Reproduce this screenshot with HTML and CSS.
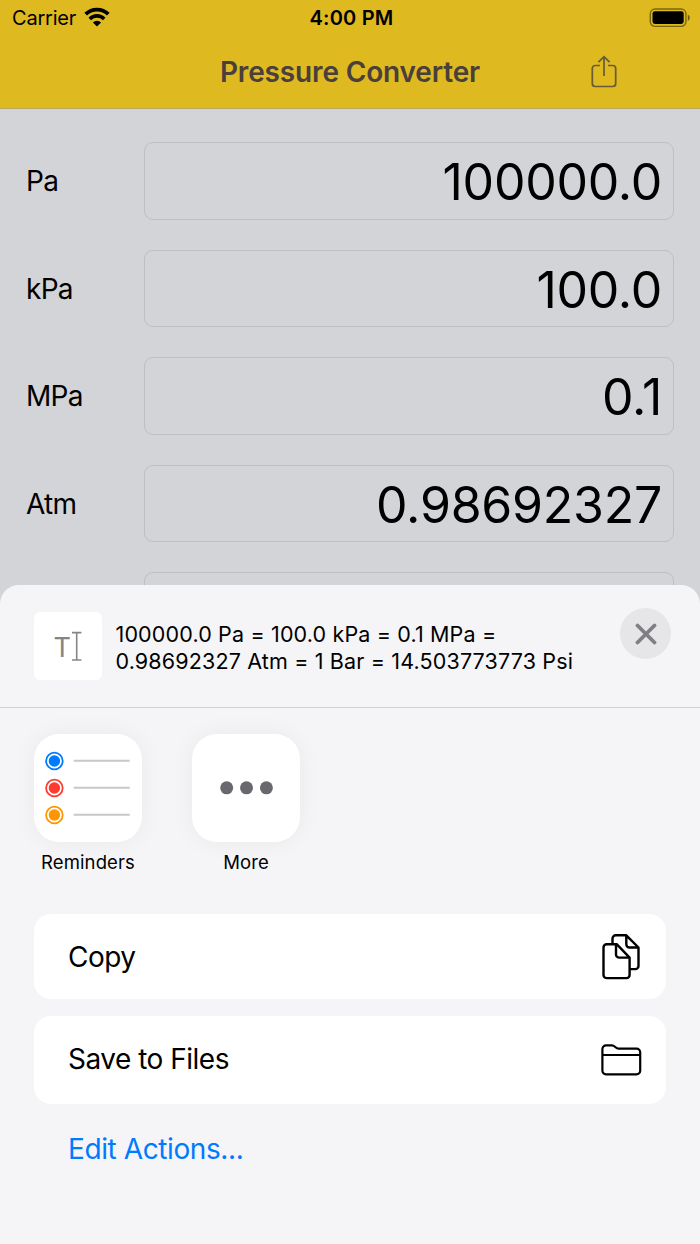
FILE: index.html
```
<!DOCTYPE html>
<html lang="en">
<head>
    <meta charset="UTF-8">
    <meta name="viewport" content="width=device-width, initial-scale=1.0">
    <title>Pressure Converter</title>
    <link rel="stylesheet" href="styles.css">
</head>
<body>
    <header class="top">
        <div class="status-bar">
            <div class="status-left">
                <span class="carrier">Carrier</span>
                <svg class="wifi" width="26" height="20" viewBox="0 0 26 20">
                    <path d="M1.7 7.2a16 16 0 0 1 22.6 0" fill="none" stroke="#000" stroke-width="3.8"/>
                    <path d="M5.8 11.9a10.2 10.2 0 0 1 14.4 0" fill="none" stroke="#000" stroke-width="3.6"/>
                    <path d="M8.9 15.4a5.8 5.8 0 0 1 8.2 0L13 19.4z"/>
                </svg>
            </div>
            <span class="clock">4:00 PM</span>
            <div class="status-right">
                <svg class="battery" width="42" height="20" viewBox="0 0 42 20">
                    <rect x="1.3" y="1" width="35.6" height="17.4" rx="4.8" fill="none" stroke="#000" stroke-opacity="0.45" stroke-width="1.4"/>
                    <rect x="3.5" y="3.2" width="31.2" height="12.8" rx="2.4"/>
                    <path d="M38.8 6.6v6.4q2-.9 2-3.2t-2-3.2z" fill-opacity="0.5"/>
                </svg>
            </div>
        </div>
        <div class="nav-bar">
            <h1 class="title">Pressure Converter</h1>
            <button class="share" aria-label="Share">
                <svg width="26" height="34" viewBox="0 0 26 34">
                    <path d="M9 10.5H4.3a3 3 0 0 0-3 3v15a3 3 0 0 0 3 3h17.4a3 3 0 0 0 3-3v-15a3 3 0 0 0-3-3H17M13 21V1.6M7.4 7.2 13 1.6l5.600 5.600" fill="none" stroke="#665c36" stroke-width="1.7"/>
                </svg>
            </button>
        </div>
    </header>

    <main class="units">
        <div class="unit">
            <span class="unit-name">Pa</span>
            <div class="unit-value">100000.0</div>
        </div>
        <div class="unit">
            <span class="unit-name">kPa</span>
            <div class="unit-value">100.0</div>
        </div>
        <div class="unit">
            <span class="unit-name">MPa</span>
            <div class="unit-value">0.1</div>
        </div>
        <div class="unit">
            <span class="unit-name">Atm</span>
            <div class="unit-value">0.98692327</div>
        </div>
        <div class="unit">
            <span class="unit-name"></span>
            <div class="unit-value"></div>
        </div>
    </main>

    <section class="sheet">
        <div class="sheet-header">
            <div class="preview">
                <svg width="68" height="68" viewBox="0 0 68 68">
                    <text class="preview-letter" x="28.3" y="44.6" text-anchor="middle">T</text>
                    <path d="M38 20.6h9.400M38 48h9.400M42.700 20.6V48" fill="none" stroke="#858585" stroke-width="1.6"/>
                </svg>
            </div>
            <p class="summary">100000.0 Pa = 100.0 kPa = 0.1 MPa =<br>0.98692327 Atm = 1 Bar = 14.503773773 Psi</p>
            <button class="close" aria-label="Close">
                <svg width="22" height="22" viewBox="0 0 22 22">
                    <path d="M2.500 2.500l17 17M19.500 2.500l-17 17" stroke="#7f7f84" stroke-width="3.8" stroke-linecap="round"/>
                </svg>
            </button>
        </div>

        <div class="apps">
            <div class="app">
                <div class="app-icon">
                    <svg width="108" height="108" viewBox="0 0 108 108">
                        <g stroke="#c7c7cc" stroke-width="2">
                            <path d="M39.7 26.8h56M39.7 53.8h56M39.7 80.8h56"/>
                        </g>
                        <g fill="none" stroke-width="1.8">
                            <circle cx="20.4" cy="27" r="8.3" stroke="#007aff"/>
                            <circle cx="20.4" cy="54" r="8.3" stroke="#ff3b30"/>
                            <circle cx="20.4" cy="81" r="8.3" stroke="#ff9500"/>
                        </g>
                        <circle cx="20.4" cy="27" r="5.7" fill="#007aff"/>
                        <circle cx="20.4" cy="54" r="5.7" fill="#ff3b30"/>
                        <circle cx="20.4" cy="81" r="5.7" fill="#ff9500"/>
                    </svg>
                </div>
                <span class="app-name">Reminders</span>
            </div>
            <div class="app">
                <div class="app-icon">
                    <svg width="108" height="108" viewBox="0 0 108 108" fill="#68686f">
                        <circle cx="34.7" cy="53.8" r="6.5"/>
                        <circle cx="54.5" cy="53.8" r="6.5"/>
                        <circle cx="74.4" cy="53.8" r="6.5"/>
                    </svg>
                </div>
                <span class="app-name">More</span>
            </div>
        </div>

        <div class="actions">
            <div class="action copy">
                <span>Copy</span>
                <svg width="42" height="48" viewBox="0 0 42 48" fill="none" stroke="#000" stroke-width="2.4" stroke-linejoin="round">
                    <path d="M12.5 11V5.500a3.200 3.200 0 0 1 3.200-3.200h10.600L38.500 14.500v18.400a3.200 3.200 0 0 1-3.200 3.200h-5.400M26.300 2.300v9a3.200 3.200 0 0 0 3.200 3.200h9"/>
                    <path d="M6.700 11.200h10L29.600 24.600v17.300a3.200 3.200 0 0 1-3.200 3.200H6.700a3.200 3.200 0 0 1-3.200-3.200V14.400a3.200 3.200 0 0 1 3.200-3.200zM16 11.200v10.200a3.200 3.200 0 0 0 3.200 3.200h10.400"/>
                </svg>
            </div>
            <div class="action save">
                <span>Save to Files</span>
                <svg width="42" height="34" viewBox="0 0 42 34" fill="none" stroke="#000" stroke-width="2.2" stroke-linejoin="round">
                    <path d="M2.400 6A3.600 3.600 0 0 1 6 2.400h5.800c1.800 0 2.600.8 3.600 1.700s1.600 1.500 3.200 1.500h18a3.600 3.600 0 0 1 3.600 3.600v18.600a3.600 3.600 0 0 1-3.600 3.600H6a3.600 3.600 0 0 1-3.600-3.600zM2.400 12h37.800"/>
                </svg>
            </div>
            <a class="edit-actions">Edit Actions...</a>
        </div>
    </section>
</body>
</html>
```
FILE: styles.css
```
* {
    box-sizing: border-box;
}
body {
    margin: 0;
    height: 1244px;
    position: relative;
    overflow: hidden;
    font-family: Inter, "Liberation Sans", sans-serif;
    color: #000;
    background: #d3d4d8;
}
button {
    padding: 0;
    border: none;
    background: none;
}
svg {
    display: block;
}

/* status bar and title */
.top {
    height: 109px;
    background: #dfb920;
    border-bottom: 1px solid #b9a766;
}
.status-bar {
    display: grid;
    grid-template-columns: 1fr auto 1fr;
    align-items: center;
    height: 36px;
    padding: 0 9px 0 12px;
    font-size: 20px;
}
.status-left {
    display: flex;
    align-items: center;
    gap: 8px;
}
.carrier {
    letter-spacing: -0.2px;
}
.wifi {
    margin-bottom: 3px;
}
.clock {
    font-weight: 600;
    letter-spacing: 0.2px;
}
.status-right {
    display: flex;
    justify-content: flex-end;
}
.nav-bar {
    display: grid;
    grid-template-columns: 1fr auto 1fr;
    align-items: center;
    height: 71px;
}
.title {
    grid-column: 2;
    margin: 0;
    font-size: 28px;
    font-weight: 600;
    letter-spacing: -0.15px;
    color: #4a3f3a;
}
.share {
    justify-self: start;
    margin-left: 111px;
}

/* converter fields */
.units {
    display: flex;
    flex-direction: column;
    gap: 30px;
    padding: 33px 26px 0 26px;
}
.unit {
    display: flex;
    align-items: center;
    height: 77.5px;
}
.unit-name {
    width: 117.5px;
    padding-top: 1px;
    font-size: 28px;
    letter-spacing: -0.7px;
}
.unit-value {
    flex: 1;
    height: 100%;
    padding-right: 11px;
    border: 1px solid #bebfc3;
    border-radius: 9px;
    font-size: 50px;
    line-height: 78px;
    letter-spacing: -0.25px;
    text-align: right;
}

/* share sheet slides over the converter */
.sheet {
    position: absolute;
    left: 0;
    right: 0;
    top: 585px;
    bottom: 0;
    border-radius: 19px 19px 0 0;
    background: #f5f5f7;
}
.sheet-header {
    display: flex;
    align-items: flex-start;
    height: 123px;
    padding: 27px 29px 0 34px;
    border-bottom: 1px solid #d1d1d4;
}
.preview {
    width: 68px;
    height: 68px;
    border-radius: 6px;
    background: #fff;
}
.preview-letter {
    font-size: 27px;
    fill: #858585;
}
.summary {
    flex: 1;
    margin: 9px 0 0 13.5px;
    font-size: 21.5px;
    line-height: 27px;
    letter-spacing: 0.15px;
    white-space: nowrap;
}
.close {
    display: flex;
    align-items: center;
    justify-content: center;
    width: 51px;
    height: 51px;
    margin-top: -4px;
    border-radius: 50%;
    background: #e6e6e9;
}
.apps {
    display: flex;
    gap: 50px;
    padding: 26px 34px 0;
}
.app {
    display: flex;
    flex-direction: column;
    align-items: center;
    width: 108px;
}
.app-icon {
    width: 108px;
    height: 108px;
    border-radius: 25px;
    background: #fff;
    box-shadow: 0 0 24px rgba(0, 0, 0, 0.05);
}
.app-name {
    margin-top: 8px;
    font-size: 18.5px;
    line-height: 24px;
    letter-spacing: 0.1px;
}
.actions {
    display: flex;
    flex-direction: column;
    padding: 40px 34px 0;
    font-size: 28px;
    letter-spacing: -0.5px;
}
.action {
    display: flex;
    align-items: center;
    justify-content: space-between;
    padding: 0 24px 0 34px;
    border-radius: 17px;
    background: #fff;
}
.copy {
    height: 85px;
    margin-bottom: 17px;
}
.save {
    height: 88px;
}
.save span {
    margin-bottom: 2px;
}
.edit-actions {
    margin: 28px 0 0 34px;
    letter-spacing: -0.4px;
    color: #007aff;
}
```
